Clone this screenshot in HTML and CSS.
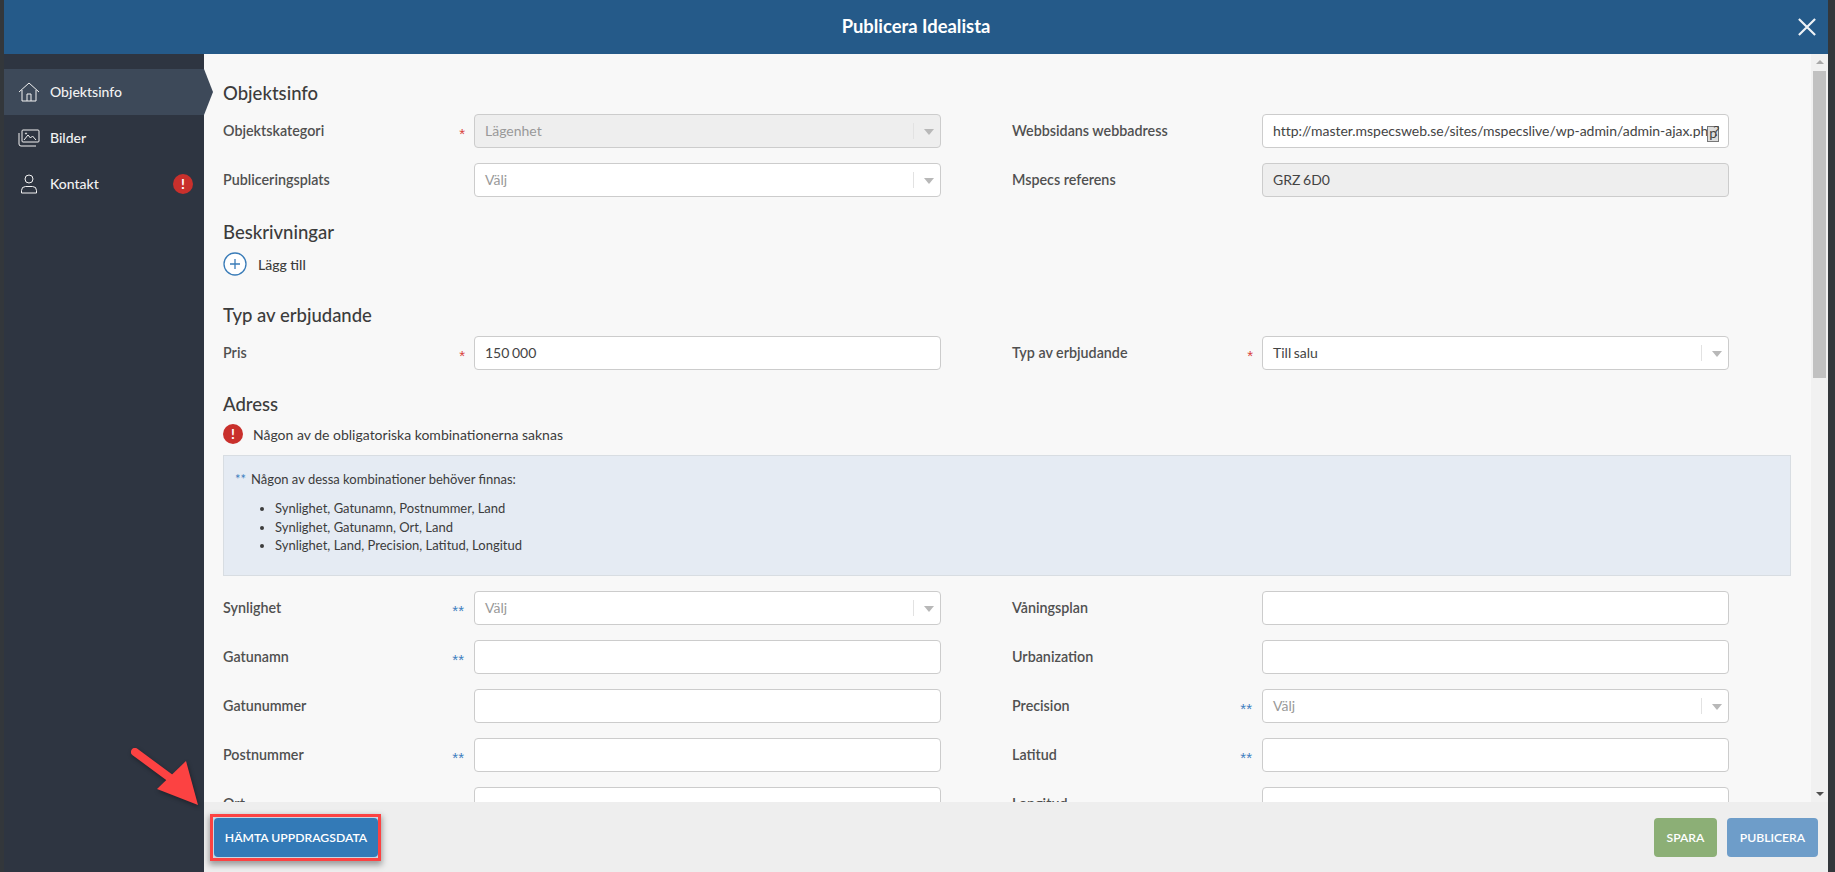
FILE: index.html
```html
<!DOCTYPE html>
<html lang="sv">
<head>
<meta charset="utf-8">
<title>Publicera Idealista</title>
<link rel="stylesheet" href="styles.css">
</head>
<body>
<div class="modal">
  <header class="topbar">
    <h1>Publicera Idealista</h1>
    <svg class="close" viewBox="0 0 20 20"><path d="M1 1 19 19M19 1 1 19"/></svg>
  </header>
  <div class="body">
    <nav class="side">
      <a class="nav active">
        <svg viewBox="0 0 22 20"><path d="M1 10 11 1l10 9M4 8v11h14V8M9 19v-7h4v7"/></svg>
        <span>Objektsinfo</span>
      </a>
      <a class="nav">
        <svg viewBox="0 0 22 18"><rect x="4" y="1" width="17" height="12" rx="1"/><path d="M1 4v11q0 2 2 2h15M6 11l4-5 2.500 3 2-2 3.500 4"/><circle cx="8" cy="4.500" r=".6"/></svg>
        <span>Bilder</span>
      </a>
      <a class="nav">
        <svg viewBox="0 0 22 20"><circle cx="11" cy="5" r="4"/><path d="M3.500 19v-2.500q0-4 4-4h7q4 0 4 4V19z"/></svg>
        <span>Kontakt</span>
        <i class="alert nav-alert">!</i>
      </a>
    </nav>
    <div class="main">
      <div class="scroll">
        <h2 class="first">Objektsinfo</h2>
        <div class="grid">
          <div class="field"><label>Objektskategori<em class="req">*</em></label><div class="input select off placeholder">Lägenhet<b></b></div></div>
          <div class="field"><label>Webbsidans webbadress</label><div class="input url">http://master.mspecsweb.se/sites/mspecslive/wp-admin/admin-ajax.ph<span class="glyph">p</span>?</div></div>
          <div class="field"><label>Publiceringsplats</label><div class="input select placeholder">Välj<b></b></div></div>
          <div class="field"><label>Mspecs referens</label><div class="input off">GRZ 6D0</div></div>
        </div>
        <h2 class="desc">Beskrivningar</h2>
        <div class="add">
          <svg viewBox="0 0 24 24"><circle cx="12" cy="12" r="11"/><path d="M12 7v10M7 12h10"/></svg>
          <span>Lägg till</span>
        </div>
        <h2 class="offer">Typ av erbjudande</h2>
        <div class="grid">
          <div class="field"><label>Pris<em class="req">*</em></label><div class="input">150 000</div></div>
          <div class="field"><label>Typ av erbjudande<em class="req">*</em></label><div class="input select">Till salu<b></b></div></div>
        </div>
        <h2 class="addr">Adress</h2>
        <div class="warn"><i class="alert">!</i><span>Någon av de obligatoriska kombinationerna saknas</span></div>
        <div class="info">
          <p><em class="star">**</em>Någon av dessa kombinationer behöver finnas:</p>
          <ul>
            <li>Synlighet, Gatunamn, Postnummer, Land</li>
            <li>Synlighet, Gatunamn, Ort, Land</li>
            <li>Synlighet, Land, Precision, Latitud, Longitud</li>
          </ul>
        </div>
        <div class="grid">
          <div class="field"><label>Synlighet<em class="any">**</em></label><div class="input select placeholder">Välj<b></b></div></div>
          <div class="field"><label>Våningsplan</label><div class="input"></div></div>
          <div class="field"><label>Gatunamn<em class="any">**</em></label><div class="input"></div></div>
          <div class="field"><label>Urbanization</label><div class="input"></div></div>
          <div class="field"><label>Gatunummer</label><div class="input"></div></div>
          <div class="field"><label>Precision<em class="any">**</em></label><div class="input select placeholder">Välj<b></b></div></div>
          <div class="field"><label>Postnummer<em class="any">**</em></label><div class="input"></div></div>
          <div class="field"><label>Latitud<em class="any">**</em></label><div class="input"></div></div>
          <div class="field"><label>Ort</label><div class="input"></div></div>
          <div class="field"><label>Longitud</label><div class="input"></div></div>
        </div>
      </div>
      <div class="scrollbar">
        <span class="up"></span>
        <span class="thumb"></span>
        <span class="down"></span>
      </div>
    </div>
  </div>
  <footer class="foot">
    <div class="mark"><button class="btn fetch">HÄMTA UPPDRAGSDATA</button></div>
    <div class="actions">
      <button class="btn save">SPARA</button>
      <button class="btn publish">PUBLICERA</button>
    </div>
  </footer>
</div>
<svg class="arrow" viewBox="0 0 80 70"><path d="M7 6 49 37"/><path class="head" d="M58 15 70 59 29 43z"/></svg>
</body>
</html>
```
FILE: styles.css
```css
* { box-sizing: border-box; }
html, body { height: 100%; }
body {
  margin: 0;
  background: #33373b;
  font-family: Lato, "Liberation Sans", sans-serif;
  font-size: 14px;
  color: #3c3c3c;
  overflow: hidden;
}
.modal {
  margin: 0 7px 0 4px;
  height: 872px;
  display: flex;
  flex-direction: column;
  background: #f8f8f8;
}
.topbar {
  height: 54px;
  flex: none;
  background: #255a89;
  display: flex;
  align-items: center;
  justify-content: center;
  position: relative;
}
.topbar h1 {
  margin: 0 0 2px;
  color: #fff;
  font-size: 18.400px;
  font-weight: 700;
}
.close {
  position: absolute;
  right: 12px;
  top: 18px;
  width: 18px;
  height: 18px;
  stroke: #eef2f6;
  stroke-width: 2.400;
  fill: none;
}
.body {
  flex: 1;
  min-height: 0;
  display: flex;
}
.side {
  width: 200px;
  flex: none;
  background: #2e3541;
  padding-top: 15px;
  position: relative;
  z-index: 2;
  margin-bottom: -70px;
}
.nav {
  height: 46px;
  display: flex;
  align-items: center;
  padding-left: 14px;
  color: #f2f2f2;
  font-size: 14px;
  font-weight: 500;
  position: relative;
}
.nav svg {
  width: 22px;
  height: 20px;
  fill: none;
  stroke: #f2f2f2;
  stroke-width: 1;
  flex: none;
}
.nav span { margin: 0 0 2px 10px; }
.nav.active { background: #3d4959; }
.nav.active::after {
  content: "";
  position: absolute;
  left: 100%;
  top: 0;
  border-style: solid;
  border-width: 23px 0 23px 9px;
  border-color: transparent transparent transparent #3d4959;
}
.alert {
  width: 20px;
  height: 20px;
  border-radius: 50%;
  background: #c9302c;
  color: #fff;
  font: 700 14px/20px Lato, sans-serif;
  text-align: center;
  flex: none;
}
.nav-alert {
  position: absolute;
  right: 11px;
  top: 13px;
}
.main {
  flex: 1;
  min-width: 0;
  position: relative;
  overflow: hidden;
}
.scroll {
  padding: 0 37px 0 19px;
}
h2 {
  margin: 0;
  font-size: 18.500px;
  font-weight: 500;
  line-height: 22px;
  color: #3c3c3c;
}
h2.first { padding-top: 28px; margin-bottom: 10px; }
h2.desc { margin-top: 1px; }
h2.offer { margin-top: 28px; margin-bottom: 10px; }
h2.addr { margin-top: 0; }
.grid {
  display: grid;
  grid-template-columns: 718px 717px;
  column-gap: 71px;
  row-gap: 15px;
}
.field {
  display: grid;
  grid-template-columns: 251px 467px;
  align-items: center;
  height: 34px;
}
.field:nth-child(even) { grid-template-columns: 250px 467px; }
.grid + h2 { padding-top: 23px; }
label {
  font-weight: 600;
  font-size: 14.300px;
  position: relative;
  color: #505050;
  height: 17px;
  line-height: 15px;
}
label em {
  position: absolute;
  top: 3px;
  font-style: normal;
  font-family: "Liberation Sans", sans-serif;
  font-size: 15px;
  font-weight: 400;
}
.req { color: #d9413c; right: 9px; }
.any { color: #3f7fbf; right: 10px; }
.input {
  height: 34px;
  border: 1px solid #ccc;
  border-radius: 4px;
  background: #fff;
  line-height: 32px;
  position: relative;
  color: #444;
  white-space: nowrap;
  overflow: hidden;
  padding: 0 5px 0 10px;
  word-spacing: -1px;
}
.input.off { background: #eee; }
.url { letter-spacing: -.03px; }
.placeholder { color: #999; }
.select b {
  position: absolute;
  right: 6px;
  top: 14px;
  border-style: solid;
  border-width: 6px 5px 0;
  border-color: #b8b8b8 transparent transparent;
}
.select::after {
  content: "";
  position: absolute;
  right: 26px;
  top: 8px;
  height: 16px;
  width: 1px;
  background: #e2e2e2;
}
.glyph {
  display: inline-block;
  width: 10px;
  height: 14px;
  line-height: 11px;
  vertical-align: -2px;
  text-align: center;
  margin-right: -5px;
  outline: 1px solid #777;
  background: #ddd;
}
.add {
  display: flex;
  align-items: center;
  height: 24px;
  margin-top: 9px;
  font-weight: 500;
}
.add svg {
  width: 24px;
  height: 24px;
  fill: #fff;
  stroke: #3a7cb8;
  stroke-width: 1.300;
}
.add span { margin-left: 11px; font-size: 14px; }
.warn {
  display: flex;
  align-items: center;
  margin-top: 9px;
  height: 20px;
  font-size: 14px;
}
.warn span { margin-left: 10px; }
.info {
  margin-top: 11px;
  height: 121px;
  width: 1568px;
  background: #e5ebf3;
  border: 1px solid #d8dde2;
  padding: 15px 11px 0;
  font-size: 13px;
  margin-bottom: 15px;
}
.info p { margin: 0; line-height: 17px; }
.star { font-style: normal; color: #3f7fbf; margin-right: 5px; }
.info ul { margin: 11px 0 0; padding-left: 40px; }
.info li { line-height: 18.500px; }
.scrollbar {
  position: absolute;
  top: 0;
  right: 0;
  bottom: 0;
  width: 17px;
  background: #f1f1f1;
}
.scrollbar span { position: absolute; }
.thumb {
  top: 17px;
  left: 2px;
  width: 13px;
  height: 307px;
  background: #c1c1c1;
}
.up, .down {
  left: 5px;
  border-style: solid;
  border-color: transparent;
}
.up { top: 6px; border-width: 0 4px 4px; border-bottom-color: #a8a8a8; }
.down { bottom: 6px; border-width: 4px 4px 0; border-top-color: #505050; }
.foot {
  height: 70px;
  flex: none;
  margin-left: 200px;
  background: #eee;
  display: flex;
  align-items: center;
  justify-content: space-between;
  padding: 0 10px 0 6px;
  position: relative;
  z-index: 1;
}
.actions { display: flex; gap: 10px; }
.mark {
  display: flex;
  border: 3px solid #fc4242;
  padding: 1px 0 1px 1px;
  background: #c9d6e2;
  box-shadow: 0 3px 6px 1px rgba(0,0,0,.35);
}
.btn {
  height: 39px;
  border: 0;
  border-radius: 4px;
  color: #fff;
  font: 600 12.200px Lato, sans-serif;
  padding: 0;
  white-space: nowrap;
}
.fetch {
  width: 164px;
  background: #337ab7;
}
.save { width: 63px; background: #8caf76; }
.publish { width: 91px; background: #6e9dc9; }
.arrow {
  position: absolute;
  left: 128px;
  top: 746px;
  width: 80px;
  height: 70px;
  fill: #fc4242;
  stroke: #fc4242;
  stroke-width: 8;
  stroke-linecap: round;
  filter: drop-shadow(1px 2px 2px rgba(0,0,0,.35));
  z-index: 5;
}
.arrow .head { stroke: none; }
```
